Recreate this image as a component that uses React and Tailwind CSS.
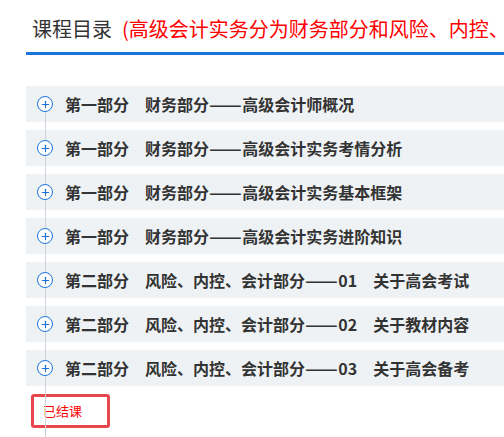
import { Plus } from "lucide-react";

const chapters = [
  ["第一部分\u3000财务部分", "高级会计师概况"],
  ["第一部分\u3000财务部分", "高级会计实务考情分析"],
  ["第一部分\u3000财务部分", "高级会计实务基本框架"],
  ["第一部分\u3000财务部分", "高级会计实务进阶知识"],
  ["第二部分\u3000风险、内控、会计部分", "01\u3000关于高会考试"],
  ["第二部分\u3000风险、内控、会计部分", "02\u3000关于教材内容"],
  ["第二部分\u3000风险、内控、会计部分", "03\u3000关于高会备考"],
];

export default function App() {
  return (
    <div
      className="w-[504px] h-[437px] overflow-hidden bg-white pl-[26px]"
      style={{ fontFamily: '"Microsoft YaHei", "Noto Sans CJK SC", "Noto Sans", sans-serif' }}
    >
      {/* Header */}
      <div className="h-[52px] flex items-end pb-[9px] pl-[6px] whitespace-nowrap overflow-hidden">
        <span className="text-[20px] leading-[28px] text-[#333]">课程目录</span>
        <span className="text-[20px] leading-[28px] text-[#ff0000] ml-[10px]">(高级会计实务分为财务部分和风险、内控、会计部分)</span>
      </div>
      <div className="h-[3px] bg-[#1a73d9]" />

      {/* Chapter list */}
      <div className="relative mt-[31px]">
        <div className="absolute z-[1] left-[19px] top-[18px] bottom-0 w-px bg-[#cfd3d8]" />
        <div className="flex flex-col gap-[8px]">
          {chapters.map(([a, b]) => (
            <div key={b} className="h-[36px] bg-[#eff2f5] flex items-center pl-[11px] whitespace-nowrap">
              <span className="relative z-[2] w-[16px] h-[16px] rounded-full border-[1.5px] border-[#1a73d9] bg-white flex items-center justify-center text-[#1a73d9]">
                <Plus size={11} strokeWidth={2.5} />
              </span>
              <span className="ml-[12px] text-[16px] font-bold text-[#333] leading-none flex items-center">
                {a}
                <span className="inline-block scale-x-[1.2] origin-left mr-[6px]">——</span>
                {b}
              </span>
            </div>
          ))}
        </div>
        <div className="pt-[8px] pb-[9px] pl-[5px]">
          <div className="w-[79px] h-[34px] border-[3px] border-[#e8484d] rounded-[3px] flex items-center pl-[9px]">
            <span className="text-[13px] text-[#ff0000]">已结课</span>
          </div>
        </div>
      </div>
    </div>
  );
}
